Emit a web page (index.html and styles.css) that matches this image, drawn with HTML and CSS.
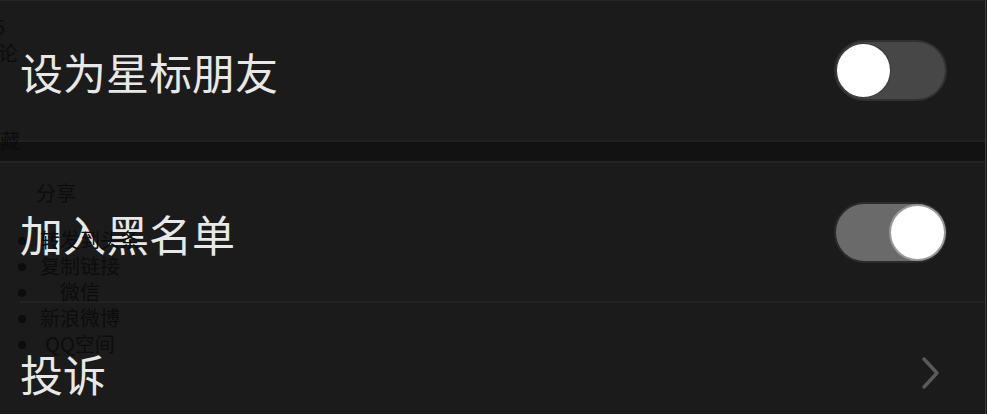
FILE: index.html
```html
<!DOCTYPE html>
<html lang="zh-CN">
<head>
<meta charset="utf-8">
<title>设置</title>
<link rel="stylesheet" href="styles.css">
</head>
<body>
<div class="page">
  <div class="settings">
    <div class="group">
      <div class="row">
        <span class="label">设为星标朋友</span>
        <span class="switch"><span class="knob"></span></span>
      </div>
    </div>
    <div class="gap"></div>
    <div class="group">
      <div class="row">
        <span class="label">加入黑名单</span>
        <span class="switch on"><span class="knob"></span></span>
      </div>
      <div class="row row-sep">
        <span class="label">投诉</span>
        <svg class="chev" width="20" height="34" viewBox="0 0 20 34"><path d="M3 3 L16 17 L3 31" fill="none" stroke="#5a5a5a" stroke-width="3.4" stroke-linecap="round" stroke-linejoin="round"/></svg>
      </div>
    </div>
  </div>

  <div class="overlay">
    <div class="o-num">5</div>
    <div class="o-comment">论</div>
    <div class="o-fav">藏</div>
    <div class="o-share">分享</div>
    <ul class="o-list">
      <li>转发到头条</li>
      <li>复制链接</li>
      <li>微信</li>
      <li>新浪微博</li>
      <li>QQ空间</li>
    </ul>
  </div>
</div>
</body>
</html>
```
FILE: styles.css
```css
html, body {
  margin: 0;
  padding: 0;
  background: #1b1b1b;
  overflow: hidden;
}
.page {
  position: relative;
  width: 987px;
  height: 414px;
  overflow: hidden;
  font-family: "Noto Sans CJK SC", "Noto Sans", sans-serif;
}
.settings {
  width: 986px;
  border-right: 1px solid #3a3a3a;
  height: 414px;
  border-top: 1px solid #262626;
  box-sizing: border-box;
}
.group {
  background: #1b1b1b;
}
.group:first-child {
  border-bottom: 2px solid #222222;
}
.gap {
  height: 19px;
  background: #121212;
  border-bottom: 2px solid #232323;
}
.row {
  display: flex;
  align-items: center;
  justify-content: space-between;
  height: 138px;
  padding: 0 38px 0 20px;
}
.group:first-child .row {
  height: 139px;
}
.row-sep {
  border-top: 2px solid #222222;
  margin-left: 20px;
  padding-left: 0;
}
.label {
  color: #e8e8e8;
  font-size: 43px;
  line-height: 1;
  margin-top: 2px;
}
.switch {
  display: flex;
  align-items: center;
  width: 113px;
  height: 61px;
  box-sizing: border-box;
  border-radius: 31px;
  background: #474747;
  border: 2px solid #303030;
  padding: 0 1px;
}
.switch .knob {
  width: 53px;
  height: 53px;
  border-radius: 50%;
  background: #ffffff;
  box-shadow: 0 0 0 1px #3a3a3a;
}
.switch.on {
  background: #6a6a6a;
  border-color: #2c2c2c;
  justify-content: flex-end;
}
.switch.on .knob {
  box-shadow: 0 0 0 2px #9a9a9a;
}
.chev {
  margin-right: 6px;
  margin-top: 2px;
}

.overlay {
  position: absolute;
  top: 0;
  left: 0;
  color: #0c0c0c;
  font-size: 20px;
  line-height: 26px;
}
.o-num {
  margin: 14px 0 0 -6px;
}
.o-comment {
  margin: 0 0 0 -2px;
}
.o-fav {
  margin: 62px 0 0 0;
}
.o-share {
  margin: 26px 0 0 36px;
}
.o-list {
  margin: 21px 0 0 0;
  padding: 0 0 0 40px;
}
.o-list li {
  width: 80px;
  text-align: center;
  white-space: nowrap;
}
```
